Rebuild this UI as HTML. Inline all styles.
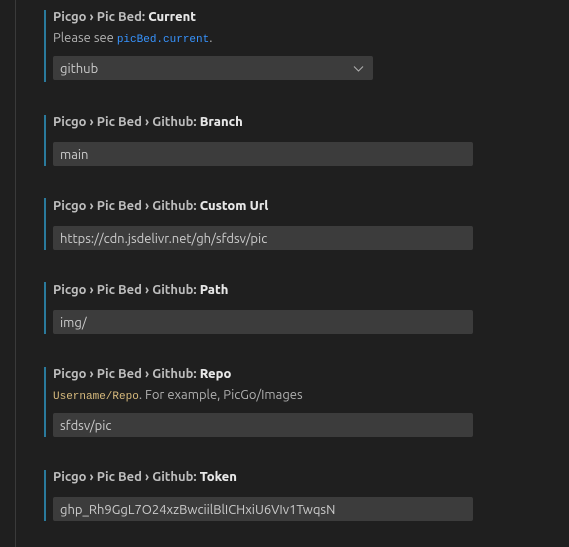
<!DOCTYPE html><html><head><style>
body{margin:0;width:569px;height:547px;background:#1f1f1f;font-family:"Ubuntu","Liberation Sans",sans-serif;font-size:13px;color:#cccccc;position:relative;overflow:hidden}
.vl{position:absolute;left:15px;top:0;width:1px;height:547px;background:#3a3a3a}
.bar{position:absolute;left:44px;width:2px;background:#2a7a9c}
.t{position:absolute;left:53px;font-weight:bold;color:#bdbdbd;white-space:nowrap;line-height:16px}
.t b{color:#e7e7e7}
.d{position:absolute;left:53px;color:#b0b0b0;line-height:16px;white-space:nowrap}
.in{position:absolute;left:53px;width:420px;height:24px;background:#3c3c3c;border-radius:2px;color:#cccccc;line-height:26px;padding-left:7px;box-sizing:border-box;white-space:nowrap}
code{font-family:"Liberation Mono",monospace;font-size:11px}
</style></head><body>
<div class="vl"></div>
<div class="bar" style="top:10px;height:72px"></div>
<div class="t" style="top:9px">Picgo › Pic Bed: <b>Current</b></div>
<div class="d" style="top:30px">Please see <code style="color:#3794ff">picBed.current</code>.</div>
<div class="in" style="top:56px;width:320px">github<svg style="position:absolute;right:9px;top:9px" width="11" height="8" viewBox="0 0 11 8"><path d="M1 1.5L5.5 6L10 1.5" stroke="#b0b0b0" stroke-width="1" fill="none"/></svg></div>

<div class="bar" style="top:115px;height:51px"></div>
<div class="t" style="top:114px">Picgo › Pic Bed › Github: <b>Branch</b></div>
<div class="in" style="top:142px">main</div>

<div class="bar" style="top:198px;height:52px"></div>
<div class="t" style="top:198px">Picgo › Pic Bed › Github: <b>Custom Url</b></div>
<div class="in" style="top:226px">https://cdn.jsdelivr.net/gh/sfdsv/pic</div>

<div class="bar" style="top:282px;height:52px"></div>
<div class="t" style="top:282px">Picgo › Pic Bed › Github: <b>Path</b></div>
<div class="in" style="top:310px">img/</div>

<div class="bar" style="top:367px;height:70px"></div>
<div class="t" style="top:366px">Picgo › Pic Bed › Github: <b>Repo</b></div>
<div class="d" style="top:387px"><code style="color:#d7ba7d">Username/Repo</code>. For example, PicGo/Images</div>
<div class="in" style="top:413px">sfdsv/pic</div>

<div class="bar" style="top:470px;height:51px"></div>
<div class="t" style="top:469px">Picgo › Pic Bed › Github: <b>Token</b></div>
<div class="in" style="top:497px">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</div>
</body></html>
